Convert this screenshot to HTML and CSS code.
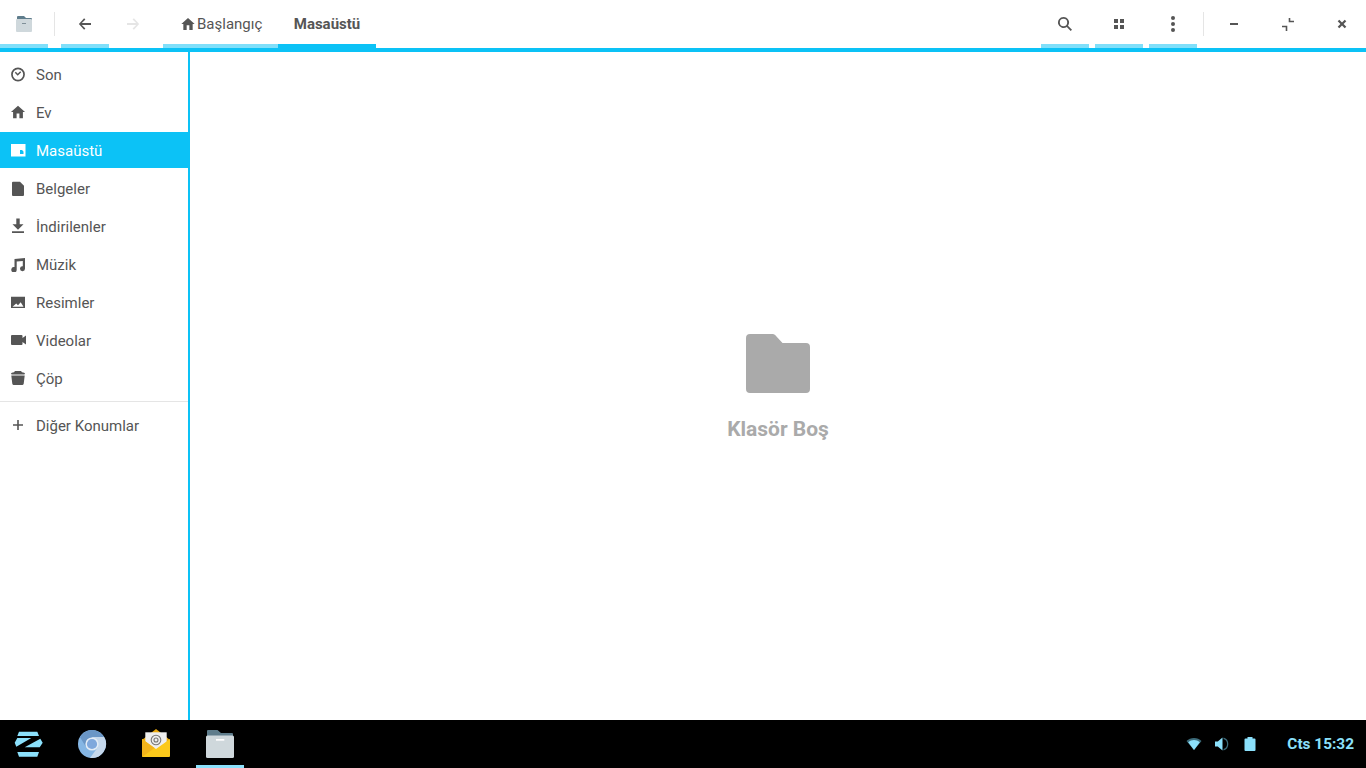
FILE: index.html
```html
<!DOCTYPE html>
<html lang="tr">
<head>
<meta charset="utf-8">
<title>Dosyalar</title>
<link rel="stylesheet" href="styles.css">
</head>
<body>
<div class="window">
  <header class="topbar">
    <div class="tab tab-lit tab-square">
      <svg class="ico-app" viewBox="0 0 16 16"><path fill="#5f7d8c" d="M1 1a1 1 0 0 1 1-1h6l2 2h5a1 1 0 0 1 1 1v3H1z"/><rect x="0" y="3" width="16" height="13" rx="1" fill="#cfd8dc"/><rect x="6" y="7" width="4" height="1" fill="#7f8f98"/></svg>
    </div>
    <div class="vsep vsep-left"></div>
    <div class="tab tab-lit tab-square">
      <svg class="ico" viewBox="0 0 16 16"><path d="M14 7.100H4.800l3.600-3.600L7.100 2.200 1.900 8l5.200 5.800 1.300-1.300-3.600-3.600H14z"/></svg>
    </div>
    <div class="tab tab-square tab-off">
      <svg class="ico" viewBox="0 0 16 16"><path d="M2 7.100h9.200L7.600 3.500l1.300-1.300L14.100 8l-5.200 5.800-1.300-1.300 3.600-3.600H2z"/></svg>
    </div>
    <div class="crumbs">
      <div class="crumb crumb-lit">
        <svg class="ico-home" viewBox="0 0 24 24"><path d="M10 21v-7h4v7h5v-9h3L12 3 2 12h3v9z"/></svg>
        <span>Başlangıç</span>
      </div>
      <div class="crumb crumb-on"><span>Masaüstü</span></div>
    </div>
    <div class="spring"></div>
    <div class="tools">
      <div class="tab tab-lit tab-square">
        <svg class="ico" viewBox="0 0 16 16"><path d="M6.500 1a5.500 5.500 0 1 0 3.300 9.900l3.900 4.100 1.300-1.300-4-4A5.500 5.500 0 0 0 6.500 1zm0 1.800a3.700 3.700 0 1 1 0 7.400 3.700 3.700 0 0 1 0-7.400z"/></svg>
      </div>
      <div class="tab tab-lit tab-square">
        <svg class="ico" viewBox="0 0 16 16"><path d="M3 3h4v4H3zM9 3h4v4H9zM3 9h4v4H3zM9 9h4v4H9z"/></svg>
      </div>
      <div class="tab tab-lit tab-square">
        <svg class="ico" viewBox="0 0 16 16"><circle cx="8" cy="2" r="2"/><circle cx="8" cy="8" r="2"/><circle cx="8" cy="14" r="2"/></svg>
      </div>
    </div>
    <div class="vsep vsep-right"></div>
    <div class="winbtns">
      <div class="tab tab-square">
        <svg class="ico" viewBox="0 0 16 16"><rect x="4" y="7" width="8" height="2"/></svg>
      </div>
      <div class="tab tab-square">
        <svg class="ico" viewBox="0 0 16 16"><path d="M8.700 2h1.600v2.700H14v1.600H8.700zM2 9.700h5.300V15H5.700v-3.700H2z"/></svg>
      </div>
      <div class="tab tab-square">
        <svg class="ico" viewBox="0 0 16 16"><path d="M5.300 3.700 8 6.400l2.700-2.700 1.600 1.600L9.600 8l2.700 2.700-1.600 1.600L8 9.600l-2.700 2.700-1.600-1.600L6.400 8 3.700 5.300z"/></svg>
      </div>
    </div>
  </header>
  <div class="body">
    <aside class="sidebar">
      <ul class="places">
        <li class="place">
          <svg class="pico" viewBox="0 0 16 16"><path fill-rule="evenodd" d="M8 1.600a6.900 6.900 0 1 0 0 13.800A6.900 6.900 0 0 0 8 1.600zm0 1.700a5.200 5.200 0 1 1 0 10.400A5.200 5.200 0 0 1 8 3.300z"/><path class="hand" d="M5.300 6.300 7.700 8.700l3-3"/></svg>
          <span>Son</span>
        </li>
        <li class="place">
          <svg class="pico" viewBox="0.600 0.600 22.800 22.800"><path d="M10 21v-7h4v7h5v-9h3L12 3 2 12h3v9z"/></svg>
          <span>Ev</span>
        </li>
        <li class="place place-on">
          <svg class="pico" viewBox="0 0 16 16"><path fill-rule="evenodd" d="M1 2h14.500v12.500H1zM10 8v4h3.500V9.500L12 8z"/></svg>
          <span>Masaüstü</span>
        </li>
        <li class="place">
          <svg class="pico" viewBox="0 0 16 16"><path d="M2 2.800a1 1 0 0 1 1-1h7l4 4V15a1 1 0 0 1-1 1H3a1 1 0 0 1-1-1z"/></svg>
          <span>Belgeler</span>
        </li>
        <li class="place">
          <svg class="pico" viewBox="0 0 16 16"><path d="M6.300 .6h3.400v5.600h3.800L8 11.700 2.500 6.200h3.800zM2 13.300h12V15H2z"/></svg>
          <span>İndirilenler</span>
        </li>
        <li class="place">
          <svg class="pico" viewBox="0 0 16 16"><path d="M4.500 3 15 2v10.700a2.500 2.500 0 1 1-2.200-2.500V5L6.700 5.600v8a2.700 2.700 0 1 1-2.200-2.600z"/></svg>
          <span>Müzik</span>
        </li>
        <li class="place">
          <svg class="pico" viewBox="0 0 16 16"><path fill-rule="evenodd" d="M1 2.700h14v11.300H1zM2.500 12.700h11L10.700 8.200 8 11.300 6.200 9.500z"/></svg>
          <span>Resimler</span>
        </li>
        <li class="place">
          <svg class="pico" viewBox="0 0 16 16"><path d="M1 4a1 1 0 0 1 1-1h9.500a1 1 0 0 1 1 1v2L16 3.500v9L12.500 10v2a1 1 0 0 1-1 1H2a1 1 0 0 1-1-1z"/></svg>
          <span>Videolar</span>
        </li>
        <li class="place">
          <svg class="pico" viewBox="0 0 16 16"><path d="M5 1h6l1 1.300c1.700.2 3 .7 3 1.400 0 .5-.4.8-1 .8H2c-.6 0-1-.3-1-.8 0-.7 1.300-1.200 3-1.400zM1.300 5.500h13.400l-1 8.300c-.1.800-1 1.200-2 1.200H4.300c-1 0-1.900-.4-2-1.200z"/></svg>
          <span>Çöp</span>
        </li>
      </ul>
      <div class="hsep"></div>
      <div class="place place-other">
        <svg class="pico" viewBox="0 0 16 16"><path d="M7.200 3h1.600v4.200H13v1.600H8.800V13H7.200V8.800H3V7.200h4.200z"/></svg>
        <span>Diğer Konumlar</span>
      </div>
    </aside>
    <main class="content">
      <svg class="empty-ico" viewBox="0 0 64 64"><path d="M0 6a4 4 0 0 1 4-4h22.500c1 0 1.900.4 2.600 1.100L36.500 11H60a4 4 0 0 1 4 4v42a4 4 0 0 1-4 4H4a4 4 0 0 1-4-4z"/></svg>
      <div class="empty-text">Klasör Boş</div>
    </main>
  </div>
  <footer class="taskbar">
    <div class="apps">
      <div class="app">
        <svg class="appico" viewBox="0 0 32 32"><path fill="#8be0fb" d="M7 3.700h18.300L27 8H5.300zM5.300 10h14L4.300 18.700 2.700 14.700zM28.300 10.700 30.700 14.700 27.700 19.300H12.700zM5.300 24H27l-1.700 4.700H7z"/></svg>
      </div>
      <div class="app">
        <svg class="appico" viewBox="0 0 32 32"><circle cx="16" cy="16" r="14" fill="#85b6e4"/><path fill="#6a96c6" d="M3.900 9A14 14 0 0 1 28.100 9H16l-6 10z"/><path fill="#c5d8ec" d="M28.100 9A14 14 0 0 1 14 29.900L22 19l-6-10z"/><circle cx="16" cy="16" r="6.600" fill="#e3ecf6"/><circle cx="16" cy="16" r="5.100" fill="#7fa8dc"/></svg>
      </div>
      <div class="app">
        <svg class="appico" viewBox="0 0 32 32"><path fill="#e8a80f" d="M2 12 16 1l14 11v8H2z"/><rect x="5.300" y="4.300" width="21.400" height="18" fill="#eeeeee"/><circle cx="16" cy="12" r="4.800" fill="none" stroke="#777" stroke-width="1.100"/><circle cx="16" cy="12" r="2" fill="none" stroke="#777" stroke-width="1.100"/><path fill="#fcc91b" d="M2 11 16 21 30 11v17a1 1 0 0 1-1 1H3a1 1 0 0 1-1-1z"/><path fill="#f3b41b" d="M2 11 14.500 20 2 29z"/></svg>
      </div>
      <div class="app app-on">
        <svg class="appico" viewBox="0 0 32 32"><path fill="#5f7d8c" d="M3 3a1 1 0 0 1 1-1h9.500l3.500 3h11a1 1 0 0 1 1 1v4H3z"/><rect x="2" y="7.500" width="28" height="22.500" rx="1.500" fill="#cfd8dc"/><rect x="12" y="11" width="8.300" height="1.700" fill="#fff"/></svg>
      </div>
    </div>
    <div class="tray">
      <svg class="tico tico-wifi" viewBox="0 0 16 16"><path d="M.5 5C2.500 3 5 2 8 2s5.500 1 7.500 3L8 14z" fill="#3c6b7a"/><path d="M2.200 6.300C4 4.800 6 4 8 4s4 .8 5.800 2.300L8 14z"/></svg>
      <svg class="tico tico-vol" viewBox="0 0 16 16"><path d="M1 5.500h2.800L8.500 1.500v13L3.800 10.500H1z"/><path d="M9.500 1.500a6.800 6.800 0 0 1 0 13v-1.500a5.300 5.300 0 0 0 0-10z" fill="#3c6b7a"/></svg>
      <svg class="tico tico-bat" viewBox="0 0 16 16"><path d="M5.500 1h5v1.500h2a1 1 0 0 1 1 1V14a1 1 0 0 1-1 1h-9a1 1 0 0 1-1-1V3.500a1 1 0 0 1 1-1h2z"/></svg>
      <div class="clock">Cts 15:32</div>
    </div>
  </footer>
</div>
</body>
</html>
```

FILE: styles.css
```css
* { box-sizing: border-box; }
html, body { margin: 0; padding: 0; height: 100%; overflow: hidden; }
body { font-family: Roboto, "Liberation Sans", sans-serif; font-size: 15px; color: #555; background: #fff; }
ul { list-style: none; margin: 0; padding: 0; }
.window { display: flex; flex-direction: column; width: 1366px; height: 768px; }

.topbar { display: flex; height: 52px; flex: none; border-bottom: 4px solid #0cc2f6; background: #fff; }
.tab { display: flex; align-items: center; justify-content: center; height: 48px; padding-top: 4px; border-bottom: 4px solid transparent; }
.tab-square { width: 48px; }
.tab-lit { border-bottom-color: #80dffa; }
.tab-off svg { opacity: .15; }
.ico { width: 16px; height: 16px; fill: #555; }
.ico-app { width: 16px; height: 16px; }
.vsep { width: 1px; height: 24px; margin-top: 12px; background: #e5e5e5; }
.vsep-left { margin-left: 6px; margin-right: 6px; }
.vsep-right { margin-left: 6px; margin-right: 6px; }
.crumbs { display: flex; margin-left: 6px; }
.crumb { display: flex; align-items: center; height: 48px; padding-top: 4px; border-bottom: 4px solid transparent; }
.crumb-lit { width: 115px; padding-left: 17px; gap: 1px; border-bottom-color: #80dffa; }
.crumb-on { width: 98px; justify-content: center; font-weight: 700; border-bottom-color: #0cc2f6; }
.ico-home { width: 16px; height: 16px; fill: #555; }
.spring { flex: 1; }
.tools, .winbtns { display: flex; gap: 6px; }

.body { display: flex; flex: 1; min-height: 0; }
.sidebar { width: 190px; flex: none; padding-top: 4px; border-right: 2px solid #0cc2f6; }
.places { display: flex; flex-direction: column; gap: 2px; }
.place { display: flex; align-items: center; gap: 10px; height: 36px; padding-left: 10px; }
.place span { padding-top: 2px; }
.place-on { background: #0cc2f6; color: #fff; }
.place-other { margin-top: 5px; }
.pico { width: 16px; height: 16px; fill: #555; flex: none; }
.place-on .pico { fill: #fff; }
.hand { fill: none; stroke: #555; stroke-width: 1.500; }
.hsep { height: 1px; margin-top: 5px; background: #e5e5e5; }

.content { flex: 1; display: flex; flex-direction: column; align-items: center; justify-content: center; gap: 21px; }
.empty-ico { width: 64px; height: 64px; fill: #aaa; }
.empty-text { font-size: 21px; line-height: 24px; font-weight: 700; color: #aaa; }

.taskbar { display: flex; justify-content: space-between; height: 48px; flex: none; background: #000; }
.apps { display: flex; gap: 16px; padding-left: 4px; }
.app { display: flex; align-items: center; justify-content: center; width: 48px; height: 48px; border-bottom: 3px solid transparent; padding-top: 3px; }
.app-on { border-bottom-color: #8be0fb; }
.appico { width: 32px; height: 32px; }
.tray { display: flex; align-items: center; padding-right: 12px; }
.tico { width: 16px; height: 16px; fill: #8be0fb; }
.tico-wifi { margin-right: 12px; }
.tico-vol { margin-right: 12px; }
.tico-bat { margin-right: 29px; }
.clock { font-size: 15.400px; font-weight: 700; color: #8be0fb; }
```
